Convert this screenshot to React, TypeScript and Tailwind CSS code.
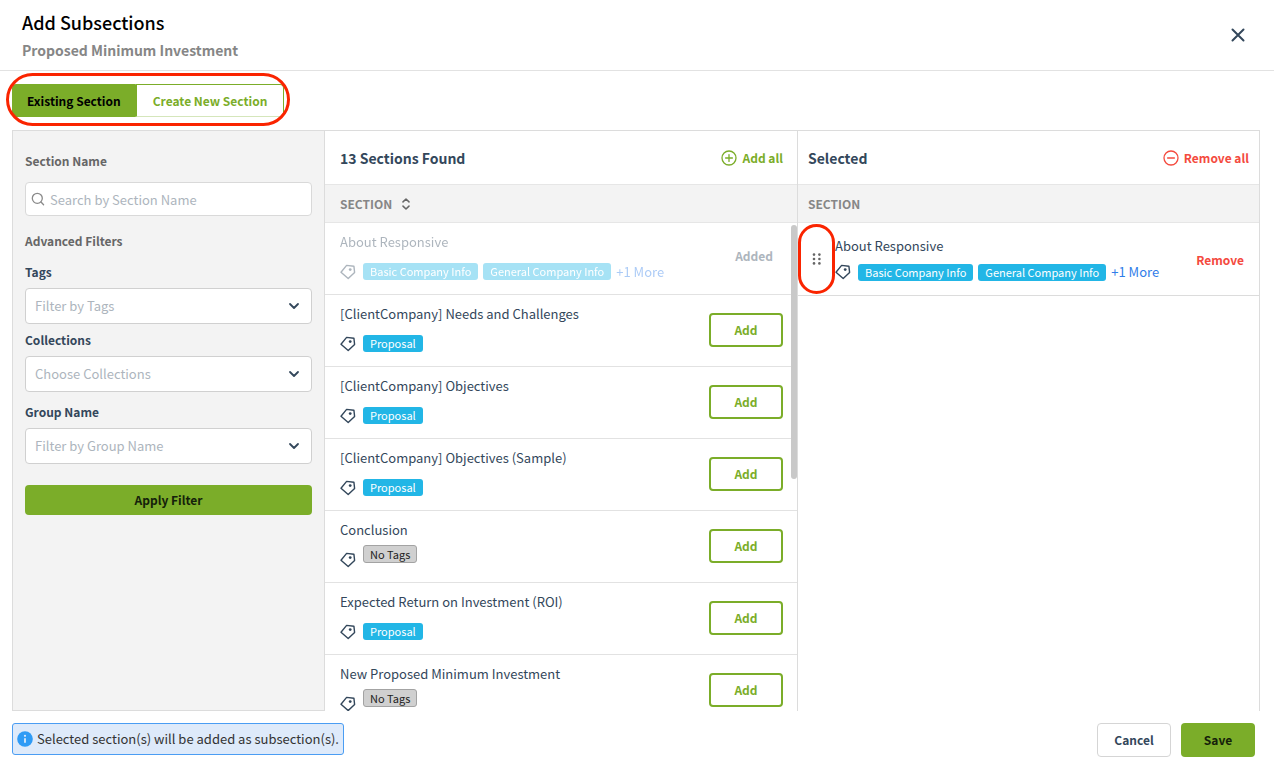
import { useState } from 'react'
import type { ReactNode } from 'react'
import clsx from 'clsx'

interface Section {
  id: number
  name: string
  tags: string[]
  more?: number
}

const SECTIONS: Section[] = [
  { id: 1, name: 'About Responsive', tags: ['Basic Company Info', 'General Company Info'], more: 1 },
  { id: 2, name: '[ClientCompany] Needs and Challenges', tags: ['Proposal'] },
  { id: 3, name: '[ClientCompany] Objectives', tags: ['Proposal'] },
  { id: 4, name: '[ClientCompany] Objectives (Sample)', tags: ['Proposal'] },
  { id: 5, name: 'Conclusion', tags: [] },
  { id: 6, name: 'Expected Return on Investment (ROI)', tags: ['Proposal'] },
  { id: 7, name: 'New Proposed Minimum Investment', tags: [] }
]

function TagIcon() {
  return (
    <svg viewBox="0 0 16 16" className="mr-[7px] size-4 shrink-0" fill="none" stroke="currentColor" strokeWidth="1.4" strokeLinejoin="round" aria-hidden="true">
      <path d="M1 8.2 6.6 1.4 13.9 2.2 14.6 8.4 8.2 14.6Z" />
      <circle cx="10.2" cy="5.6" r="1.4" fill="currentColor" stroke="none" />
    </svg>
  )
}

function ChevronIcon() {
  return (
    <svg viewBox="0 0 12 12" className="pointer-events-none absolute top-3 right-3 size-3" fill="none" stroke="#33475b" strokeWidth="1.8" strokeLinecap="round" strokeLinejoin="round" aria-hidden="true">
      <path d="M2 4 6 8 10 4" />
    </svg>
  )
}

function TagList({ section }: { section: Section }) {
  return (
    <div className="flex h-5 items-center">
      <TagIcon />
      {section.tags.length === 0 && (
        <span className="mb-3 rounded-[3px] border border-[#a3a3a3] bg-[#d0d0d0] px-1.5 text-[11px] leading-4 text-[#222]">
          No Tags
        </span>
      )}
      {section.tags.map((tag) => (
        <span key={tag} className="mr-[5px] rounded-[3px] bg-[#22b6e6] px-[7px] text-[11px] leading-[17px] text-white">
          {tag}
        </span>
      ))}
      {section.more && (
        <button type="button" className="text-[13px] leading-4 text-[#2f7de9]">
          +{section.more} More
        </button>
      )}
    </div>
  )
}

interface FilterSelectProps {
  id: string
  label: string
  placeholder: string
}

function FilterSelect({ id, label, placeholder }: FilterSelectProps) {
  return (
    <div>
      <label htmlFor={id} className="block text-xs leading-5 font-bold">
        {label}
      </label>
      <div className="relative mt-1.5">
        <select
          id={id}
          defaultValue=""
          className="h-9 w-full appearance-none rounded border border-[#d0d0d0] bg-white px-[9px] text-[13px] text-[#adb5bd]"
        >
          <option value="">{placeholder}</option>
        </select>
        <ChevronIcon />
      </div>
    </div>
  )
}

function ColumnHeader({ title, children }: { title: string; children: ReactNode }) {
  return (
    <div className="flex h-[53px] shrink-0 items-center justify-between">
      <h2 className="text-sm leading-5 font-bold">{title}</h2>
      {children}
    </div>
  )
}

export default function App() {
  const [tab, setTab] = useState('existing')
  const [selected, setSelected] = useState<number[]>([1])

  const add = (id: number) => setSelected([...selected, id])
  const remove = (id: number) => setSelected(selected.filter((s) => s !== id))

  return (
    <div className="relative flex h-screen flex-col bg-white font-['Noto_Sans_CJK_SC','Noto_Sans',sans-serif] text-[#33475b]">
      <header className="flex h-[71px] shrink-0 items-center justify-between border-b border-[#e2e2e2] pr-7 pl-[22px]">
        <div className="pt-0.5">
          <h1 className="text-lg leading-7 font-medium text-black">Add Subsections</h1>
          <p className="text-sm leading-7 font-bold text-[#868686]">Proposed Minimum Investment</p>
        </div>
        <button type="button" aria-label="Close">
          <svg viewBox="0 0 16 16" className="size-4" stroke="#33475b" strokeWidth="2" strokeLinecap="round" aria-hidden="true">
            <path d="M2.5 2.5 13.5 13.5M13.5 2.5 2.5 13.5" />
          </svg>
        </button>
      </header>

      <main className="flex min-h-0 flex-1 flex-col px-3 pt-[13px]">
        <div className="relative mb-[13px] flex self-start text-xs font-bold">
          <button
            type="button"
            onClick={() => setTab('existing')}
            className={clsx(
              'h-[33px] rounded-l border border-[#7bad29] px-3.5',
              tab === 'existing' ? 'bg-[#7bad29] text-black' : 'text-[#7bad29]'
            )}
          >
            Existing Section
          </button>
          <button
            type="button"
            onClick={() => setTab('new')}
            className={clsx(
              'h-[33px] rounded-r border border-[#7bad29] border-b-[#d5e6bb] px-4',
              tab === 'new' ? 'bg-[#7bad29] text-black' : 'text-[#7bad29]'
            )}
          >
            Create New Section
          </button>
          <div className="pointer-events-none absolute -inset-x-1.5 -top-[11px] -bottom-[9px] rounded-[28px] border-3 border-[#fa2400]" />
        </div>

        <div className="mr-0.5 grid min-h-0 flex-1 grid-cols-[313px_473fr_461fr] border-t border-r border-[#dcdcdc]">
          <form
            onSubmit={(e) => e.preventDefault()}
            className="flex flex-col border-x border-b border-[#dcdcdc] bg-[#f3f3f3] px-3 pt-5"
          >
            <label htmlFor="section-name" className="text-xs leading-5 font-bold text-[#666]">
              Section Name
            </label>
            <div className="relative mt-[11px]">
              <svg viewBox="0 0 14 14" className="absolute top-2.5 left-1.5 size-3.5" fill="none" stroke="#8a8a8a" strokeWidth="1.3" strokeLinecap="round" aria-hidden="true">
                <circle cx="6.3" cy="6.3" r="5" />
                <path d="M10 10 12.6 12.8" />
              </svg>
              <input
                id="section-name"
                type="text"
                placeholder="Search by Section Name"
                className="h-[34px] w-full rounded border border-[#d9d9d9] bg-white pr-2 pl-6 text-[13px] placeholder:text-[#adb5bd]"
              />
            </div>
            <h3 className="mt-[15px] mb-[11px] text-xs leading-5 font-bold text-[#666]">Advanced Filters</h3>
            <div className="flex flex-col gap-2.5">
              <div className="flex flex-col gap-1.5">
                <FilterSelect id="tags" label="Tags" placeholder="Filter by Tags" />
                <FilterSelect id="collections" label="Collections" placeholder="Choose Collections" />
              </div>
              <FilterSelect id="group" label="Group Name" placeholder="Filter by Group Name" />
            </div>
            <button type="submit" className="mt-[21px] h-[30px] rounded bg-[#7bad29] text-xs font-bold text-[#14210a]">
              Apply Filter
            </button>
          </form>

          <section className="flex min-h-0 flex-col border-r border-[#dcdcdc]">
            <div className="border-b border-[#e6e6e6] pr-3.5 pl-[15px]">
              <ColumnHeader title="13 Sections Found">
                <button
                  type="button"
                  onClick={() => setSelected(SECTIONS.map((s) => s.id))}
                  className="flex items-center gap-[5px] text-xs leading-5 font-bold text-[#7bad29]"
                >
                  <svg viewBox="0 0 16 16" className="size-4" fill="none" stroke="currentColor" strokeWidth="1.3" strokeLinecap="round" aria-hidden="true">
                    <circle cx="8" cy="8" r="7" />
                    <path d="M4.6 8H11.4M8 4.6V11.4" />
                  </svg>
                  Add all
                </button>
              </ColumnHeader>
            </div>
            <div className="relative min-h-0 flex-1">
              <div className="h-full overflow-y-auto [scrollbar-width:none]">
                <table className="w-full border-separate border-spacing-0">
                  <thead className="sticky top-0">
                    <tr>
                      <th colSpan={2} className="h-[38px] border-b border-[#e6e6e6] bg-[#f3f3f3] p-0 pl-[15px] text-left text-xs leading-5 font-bold text-[#868686]">
                        <button type="button" className="flex items-center gap-2.5">
                          SECTION
                          <svg viewBox="0 0 8 12" className="h-3 w-2" fill="none" stroke="#666" strokeWidth="1.5" strokeLinecap="round" strokeLinejoin="round" aria-hidden="true">
                            <path d="M1 3.9 4 1 7 3.9M1 8.1 4 11 7 8.1" />
                          </svg>
                        </button>
                      </th>
                    </tr>
                  </thead>
                  <tbody>
                    {SECTIONS.map((section) => {
                      const added = selected.includes(section.id)
                      return (
                        <tr key={section.id} className="h-[72px]">
                          <td className="border-b border-[#e2e2e2] p-0 pl-[15px]">
                            <div className={clsx('flex flex-col gap-2.5 pb-1', added && 'opacity-40')}>
                              <p className="text-[13px] leading-5">{section.name}</p>
                              <TagList section={section} />
                            </div>
                          </td>
                          <td className="border-b border-[#e2e2e2] p-0 pr-3.5 pb-0.5 text-right">
                            {added ? (
                              <span className="mr-2.5 block pb-1 text-xs leading-5 font-bold text-[#adb5bd]">Added</span>
                            ) : (
                              <button
                                type="button"
                                onClick={() => add(section.id)}
                                className="h-[34px] w-[74px] rounded border-2 border-[#7bad29] bg-white text-xs font-bold text-[#7bad29]"
                              >
                                Add
                              </button>
                            )}
                          </td>
                        </tr>
                      )
                    })}
                  </tbody>
                </table>
              </div>
              <div className="absolute top-10 right-0 h-[254px] w-1.5 rounded-full bg-[#c9c9c9]" />
            </div>
          </section>

          <section className="flex min-h-0 flex-col">
            <div className="border-b border-[#e6e6e6] px-2.5">
              <ColumnHeader title="Selected">
                <button
                  type="button"
                  onClick={() => setSelected([])}
                  className="flex items-center gap-[5px] text-xs leading-5 font-bold text-[#f44a3e]"
                >
                  <svg viewBox="0 0 16 16" className="size-4" fill="none" stroke="currentColor" strokeWidth="1.3" strokeLinecap="round" aria-hidden="true">
                    <circle cx="8" cy="8" r="7" />
                    <path d="M4.6 8H11.4" />
                  </svg>
                  Remove all
                </button>
              </ColumnHeader>
            </div>
            <table className="w-full border-separate border-spacing-0">
              <thead>
                <tr>
                  <th colSpan={3} className="h-[38px] border-b border-[#e6e6e6] bg-[#f3f3f3] p-0 pl-2.5 text-left text-xs leading-5 font-bold text-[#868686]">
                    SECTION
                  </th>
                </tr>
              </thead>
              <tbody>
                {SECTIONS.filter((s) => selected.includes(s.id)).map((section) => (
                  <tr key={section.id} className="h-[73px]">
                    <td className="w-[37px] border-b border-[#dcdcdc] p-0">
                      <div className="relative flex h-[72px] items-center justify-center">
                        <svg viewBox="0 0 10 12" className="h-3 w-2.5" fill="#666" aria-hidden="true">
                          <circle cx="2" cy="1.6" r="1.3" />
                          <circle cx="7.4" cy="1.6" r="1.3" />
                          <circle cx="2" cy="6" r="1.3" />
                          <circle cx="7.4" cy="6" r="1.3" />
                          <circle cx="2" cy="10.4" r="1.3" />
                          <circle cx="7.4" cy="10.4" r="1.3" />
                        </svg>
                        <div className="pointer-events-none absolute inset-x-0 inset-y-px rounded-full border-3 border-[#fa2400]" />
                      </div>
                    </td>
                    <td className="border-b border-[#dcdcdc] p-0">
                      <div className="flex flex-col gap-1.5">
                        <p className="text-[13px] leading-5">{section.name}</p>
                        <TagList section={section} />
                      </div>
                    </td>
                    <td className="border-b border-[#dcdcdc] p-0 pr-[15px] pb-0.5 text-right">
                      <button
                        type="button"
                        onClick={() => remove(section.id)}
                        className="text-xs leading-5 font-bold text-[#f44a3e]"
                      >
                        Remove
                      </button>
                    </td>
                  </tr>
                ))}
              </tbody>
            </table>
          </section>
        </div>
      </main>

      <footer className="flex h-[53px] shrink-0 items-start justify-between pt-3 pr-[19px] pl-3">
        <p className="flex h-8 items-center gap-1 rounded-[3px] border border-[#4a9df3] bg-[#deeafa] px-1 text-[13px] text-[#333]">
          <svg viewBox="0 0 16 16" className="size-4" aria-hidden="true">
            <circle cx="8" cy="8" r="7.8" fill="#2f9bf5" />
            <path d="M8 7.2V11.8" stroke="#deeafa" strokeWidth="1.8" />
            <circle cx="8" cy="4.8" r="1.1" fill="#deeafa" />
          </svg>
          Selected section(s) will be added as subsection(s).
        </p>
        <div className="flex gap-2.5 text-xs font-bold">
          <button type="button" className="h-[34px] w-[74px] rounded border border-[#d5d5d5] bg-white">
            Cancel
          </button>
          <button type="button" className="h-[34px] w-[74px] rounded bg-[#7bad29] text-[#14210a]">
            Save
          </button>
        </div>
      </footer>
    </div>
  )
}
